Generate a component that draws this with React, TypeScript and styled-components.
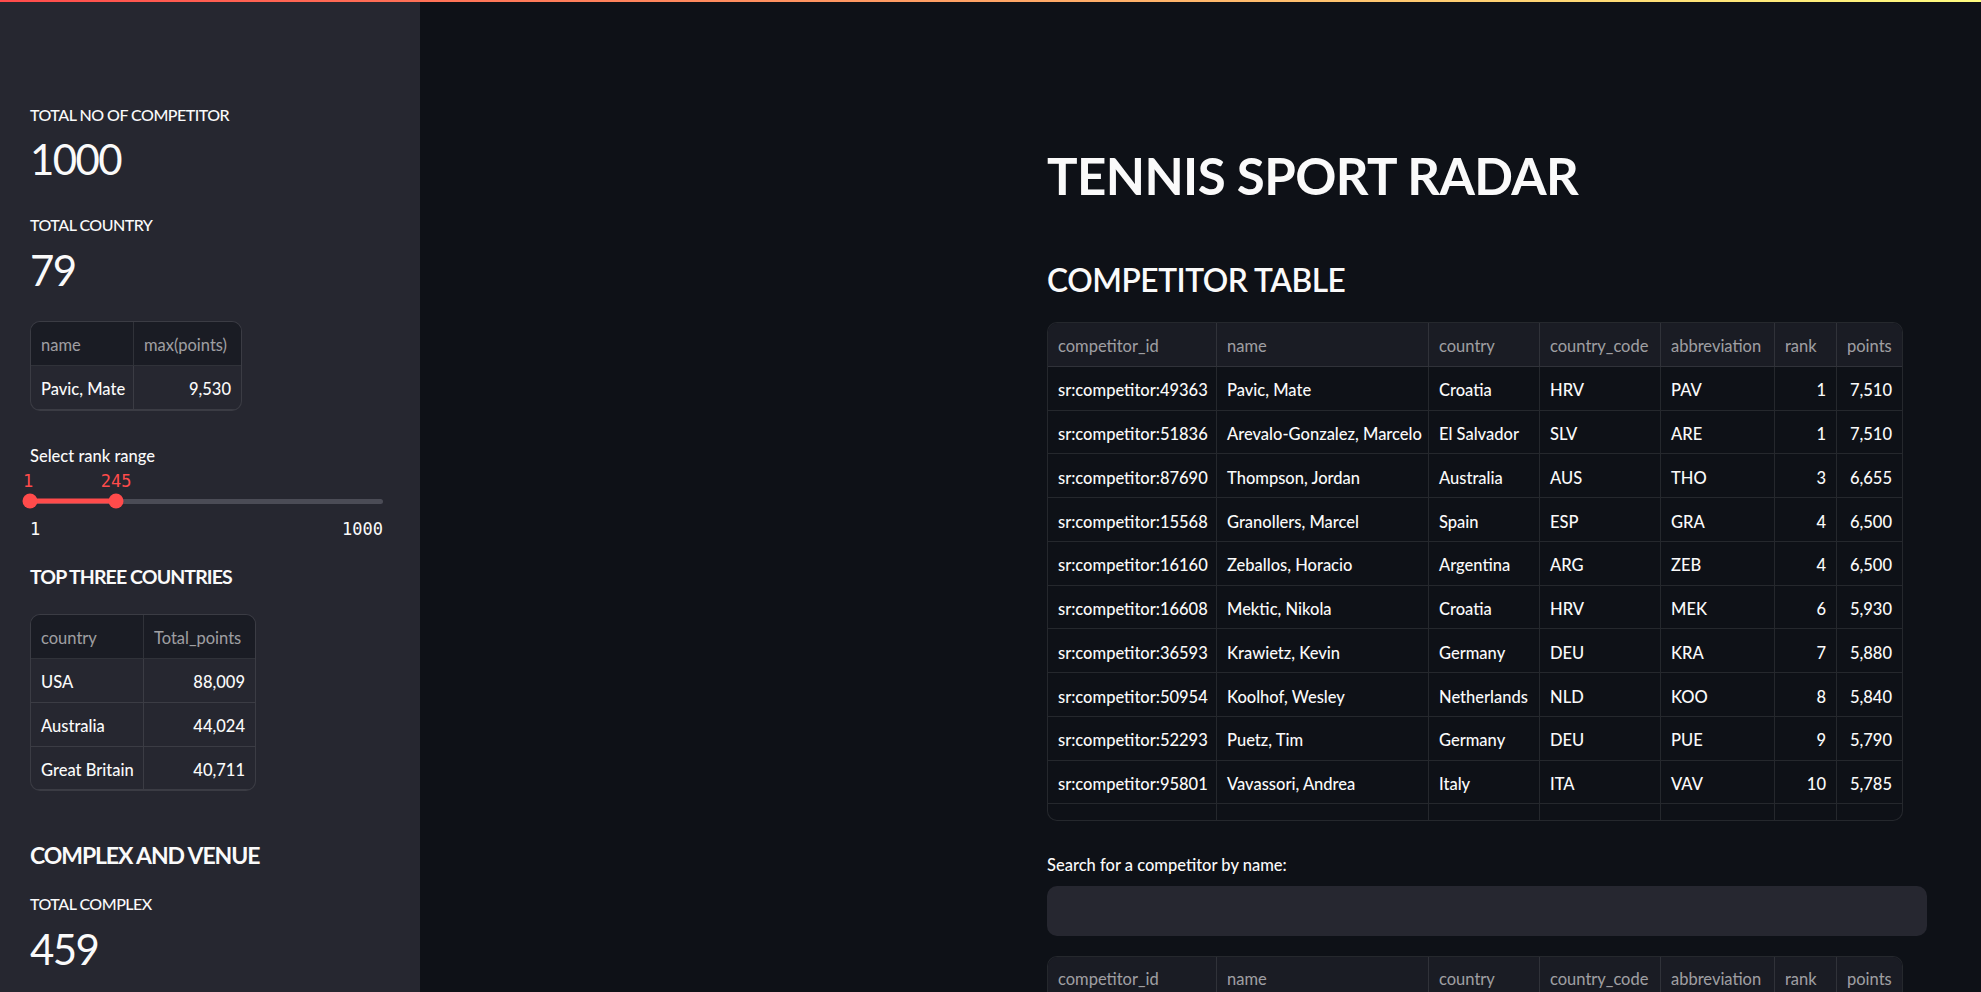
import React from "react";
import styled, { createGlobalStyle } from "styled-components";

const GlobalStyle = createGlobalStyle`
  html, body { margin: 0; padding: 0; background: #0e1117; }
  body {
    font-family: "Source Sans Pro", Lato, "Noto Sans", sans-serif;
    font-weight: 500;
    color: #fafafa;
    overflow: hidden;
  }
  * { box-sizing: border-box; }
`;

const LINE = "rgba(250, 250, 250, 0.1)";
const MONO = `"DejaVu Sans Mono", "Liberation Mono", monospace`;

const Decoration = styled.div`
  position: fixed;
  top: 0;
  left: 0;
  right: 0;
  height: 2px;
  z-index: 10;
  background: linear-gradient(90deg, #ff4b4b, #fffd80);
`;

const Shell = styled.div`
  display: flex;
  width: 100%;
  height: 100vh;
  overflow: hidden;
`;

const Sidebar = styled.aside`
  flex: 0 0 420px;
  background: #262730;
  padding: 104.5px 30px 0;
  display: flex;
  flex-direction: column;
`;

const Metric = styled.div<{ $mt?: number }>`
  display: flex;
  flex-direction: column;
  gap: 9.9px;
  margin-top: ${(p) => p.$mt ?? 0}px;
`;

const MetricLabel = styled.div`
  font-size: 16px;
  line-height: 20px;
  letter-spacing: -0.5px;
`;

const MetricValue = styled.div`
  font-size: 42px;
  font-weight: 400;
  line-height: 50px;
  letter-spacing: -1.6px;
`;

const Table = styled.div<{ $cols: string; $bg: string; $mt?: number; $height?: number }>`
  display: grid;
  grid-template-columns: ${(p) => p.$cols};
  align-content: start;
  width: max-content;
  margin-top: ${(p) => p.$mt ?? 0}px;
  ${(p) => (p.$height ? `height: ${p.$height}px;` : "")}
  border: 1px solid ${LINE};
  border-radius: 10px;
  overflow: hidden;
  background: ${(p) => p.$bg};
  font-size: 16.5px;
`;

const HeadCell = styled.div<{ $last?: boolean }>`
  height: 43.75px;
  display: flex;
  align-items: center;
  padding: 2px 10px 0;
  background: #1a1c24;
  color: rgba(250, 250, 250, 0.6);
  font-weight: 400;
  white-space: nowrap;
  overflow: hidden;
  border-bottom: 1px solid ${LINE};
  border-right: ${(p) => (p.$last ? "none" : `1px solid ${LINE}`)};
`;

const Cell = styled.div<{ $last?: boolean; $num?: boolean }>`
  height: 43.75px;
  display: flex;
  align-items: center;
  justify-content: ${(p) => (p.$num ? "flex-end" : "flex-start")};
  padding: 4px 10px 0;
  color: #fafafa;
  white-space: nowrap;
  overflow: hidden;
  border-bottom: 1px solid ${LINE};
  border-right: ${(p) => (p.$last ? "none" : `1px solid ${LINE}`)};
`;

const SliderBlock = styled.div<{ $mt?: number }>`
  display: flex;
  flex-direction: column;
  margin-top: ${(p) => p.$mt ?? 0}px;
  width: 353px;
`;

const SliderLabel = styled.div`
  font-size: 16.5px;
  line-height: 20px;
`;

const ThumbValues = styled.div`
  position: relative;
  height: 20px;
  margin-top: 5.6px;
`;

const ThumbValue = styled.span`
  position: absolute;
  top: 0;
  transform: translateX(-50%);
  font-family: ${MONO};
  font-size: 17px;
  font-weight: 400;
  line-height: 20px;
  color: #ff4b4b;
`;

const TrackArea = styled.div`
  position: relative;
  height: 20px;
  display: flex;
  align-items: center;
`;

const Track = styled.div`
  width: 100%;
  height: 5px;
  border-radius: 3px;
  background: #4b4c56;
`;

const TrackFill = styled.div`
  position: absolute;
  top: 50%;
  height: 5px;
  transform: translateY(-50%);
  background: #ff4b4b;
`;

const Thumb = styled.div`
  position: absolute;
  top: 50%;
  width: 15px;
  height: 15px;
  border-radius: 50%;
  background: #ff4b4b;
  transform: translate(-50%, -50%);
`;

const MinMax = styled.div`
  display: flex;
  justify-content: space-between;
  margin-top: 7.5px;
  font-family: ${MONO};
  font-size: 17px;
  font-weight: 400;
  line-height: 20px;
  color: #fafafa;
`;

const SideHeading = styled.div<{ $size: number; $weight: number; $lh: number; $ls: number; $mt?: number }>`
  font-size: ${(p) => p.$size}px;
  font-weight: ${(p) => p.$weight};
  line-height: ${(p) => p.$lh}px;
  letter-spacing: ${(p) => p.$ls}px;
  margin-top: ${(p) => p.$mt ?? 0}px;
`;

const Main = styled.main`
  flex: 1 1 auto;
  padding: 146px 0 0 627px;
`;

const Content = styled.div`
  width: 880px;
  display: flex;
  flex-direction: column;
  align-items: flex-start;
`;

const Title = styled.h1`
  margin: 0;
  font-size: 51px;
  font-weight: 700;
  line-height: 60px;
  letter-spacing: -0.6px;
`;

const SubTitle = styled.h3`
  margin: 54.3px 0 0;
  font-size: 31.7px;
  font-weight: 600;
  line-height: 40px;
  letter-spacing: -0.45px;
`;

const FieldLabel = styled.label`
  margin-top: 34.1px;
  font-size: 16.5px;
  line-height: 20px;
`;

const TextInput = styled.input`
  margin-top: 10.6px;
  width: 100%;
  height: 50px;
  border: none;
  outline: none;
  border-radius: 10px;
  background: #262730;
  color: #fafafa;
  padding: 0 16px;
  font-family: inherit;
  font-size: 16.5px;
`;

type Col = { key: string; num?: boolean };

function DataFrame(props: {
  cols: Col[];
  widths: number[];
  rows: (string | number)[][];
  bg: string;
  mt?: number;
  height?: number;
}) {
  const { cols, widths, rows, bg, mt, height } = props;
  const last = cols.length - 1;
  return (
    <Table $cols={widths.map((w) => `${w}px`).join(" ")} $bg={bg} $mt={mt} $height={height}>
      {cols.map((c, i) => (
        <HeadCell key={c.key} $last={i === last}>
          {c.key}
        </HeadCell>
      ))}
      {rows.map((r, ri) =>
        r.map((v, ci) => (
          <Cell key={`${ri}-${ci}`} $last={ci === last} $num={cols[ci].num}>
            {v}
          </Cell>
        ))
      )}
    </Table>
  );
}

function RangeSlider(props: { min: number; max: number; lo: number; hi: number; mt?: number }) {
  const { min, max, lo, hi, mt } = props;
  const pct = (v: number) => ((v - min) / (max - min)) * 100;
  const a = pct(lo);
  const b = pct(hi);
  return (
    <SliderBlock $mt={mt}>
      <SliderLabel>Select rank range</SliderLabel>
      <ThumbValues>
        <ThumbValue style={{ left: `calc(${a}% - 2px)` }}>{lo}</ThumbValue>
        <ThumbValue style={{ left: `${b}%` }}>{hi}</ThumbValue>
      </ThumbValues>
      <TrackArea>
        <Track />
        <TrackFill style={{ left: `${a}%`, width: `${b - a}%` }} />
        <Thumb style={{ left: `${a}%` }} />
        <Thumb style={{ left: `${b}%` }} />
      </TrackArea>
      <MinMax>
        <span>{min}</span>
        <span>{max}</span>
      </MinMax>
    </SliderBlock>
  );
}

const competitorCols: Col[] = [
  { key: "competitor_id" },
  { key: "name" },
  { key: "country" },
  { key: "country_code" },
  { key: "abbreviation" },
  { key: "rank", num: true },
  { key: "points", num: true },
];

const competitorWidths = [169, 212, 111, 121, 114, 62, 65];

const competitors: (string | number)[][] = [
  ["sr:competitor:49363", "Pavic, Mate", "Croatia", "HRV", "PAV", "1", "7,510"],
  ["sr:competitor:51836", "Arevalo-Gonzalez, Marcelo", "El Salvador", "SLV", "ARE", "1", "7,510"],
  ["sr:competitor:87690", "Thompson, Jordan", "Australia", "AUS", "THO", "3", "6,655"],
  ["sr:competitor:15568", "Granollers, Marcel", "Spain", "ESP", "GRA", "4", "6,500"],
  ["sr:competitor:16160", "Zeballos, Horacio", "Argentina", "ARG", "ZEB", "4", "6,500"],
  ["sr:competitor:16608", "Mektic, Nikola", "Croatia", "HRV", "MEK", "6", "5,930"],
  ["sr:competitor:36593", "Krawietz, Kevin", "Germany", "DEU", "KRA", "7", "5,880"],
  ["sr:competitor:50954", "Koolhof, Wesley", "Netherlands", "NLD", "KOO", "8", "5,840"],
  ["sr:competitor:52293", "Puetz, Tim", "Germany", "DEU", "PUE", "9", "5,790"],
  ["sr:competitor:95801", "Vavassori, Andrea", "Italy", "ITA", "VAV", "10", "5,785"],
  ["sr:competitor:14882", "Bolelli, Simone", "Italy", "ITA", "BOL", "11", "5,785"],
  ["sr:competitor:39234", "Ram, Rajeev", "USA", "USA", "RAM", "12", "5,530"],
];

export default function App() {
  return (
    <>
      <GlobalStyle />
      <Decoration />
      <Shell>
        <Sidebar>
          <Metric>
            <MetricLabel>TOTAL NO OF COMPETITOR</MetricLabel>
            <MetricValue>1000</MetricValue>
          </Metric>
          <Metric $mt={31.1}>
            <MetricLabel>TOTAL COUNTRY</MetricLabel>
            <MetricValue>79</MetricValue>
          </Metric>
          <DataFrame
            cols={[{ key: "name" }, { key: "max(points)", num: true }]}
            widths={[103, 107]}
            rows={[["Pavic, Mate", "9,530"]]}
            bg="#262730"
            mt={25.9}
          />
          <RangeSlider min={1} max={1000} lo={1} hi={245} mt={34.9} />
          <SideHeading $size={19.5} $weight={700} $lh={26} $ls={-0.9} $mt={25.5}>
            TOP THREE COUNTRIES
          </SideHeading>
          <DataFrame
            cols={[{ key: "country" }, { key: "Total_points", num: true }]}
            widths={[113, 111]}
            rows={[
              ["USA", "88,009"],
              ["Australia", "44,024"],
              ["Great Britain", "40,711"],
            ]}
            bg="#262730"
            mt={24.1}
          />
          <SideHeading $size={23} $weight={700} $lh={30} $ls={-1.1} $mt={49.1}>
            COMPLEX AND VENUE
          </SideHeading>
          <Metric $mt={23.5}>
            <MetricLabel>TOTAL COMPLEX</MetricLabel>
            <MetricValue>459</MetricValue>
          </Metric>
        </Sidebar>
        <Main>
          <Content>
            <Title>TENNIS SPORT RADAR</Title>
            <SubTitle>COMPETITOR TABLE</SubTitle>
            <DataFrame
              cols={competitorCols}
              widths={competitorWidths}
              rows={competitors}
              bg="#0e1117"
              mt={21.9}
              height={499}
            />
            <FieldLabel htmlFor="search">Search for a competitor by name:</FieldLabel>
            <TextInput id="search" type="text" />
            <DataFrame
              cols={competitorCols}
              widths={competitorWidths}
              rows={competitors}
              bg="#0e1117"
              mt={20}
              height={499}
            />
          </Content>
        </Main>
      </Shell>
    </>
  );
}
